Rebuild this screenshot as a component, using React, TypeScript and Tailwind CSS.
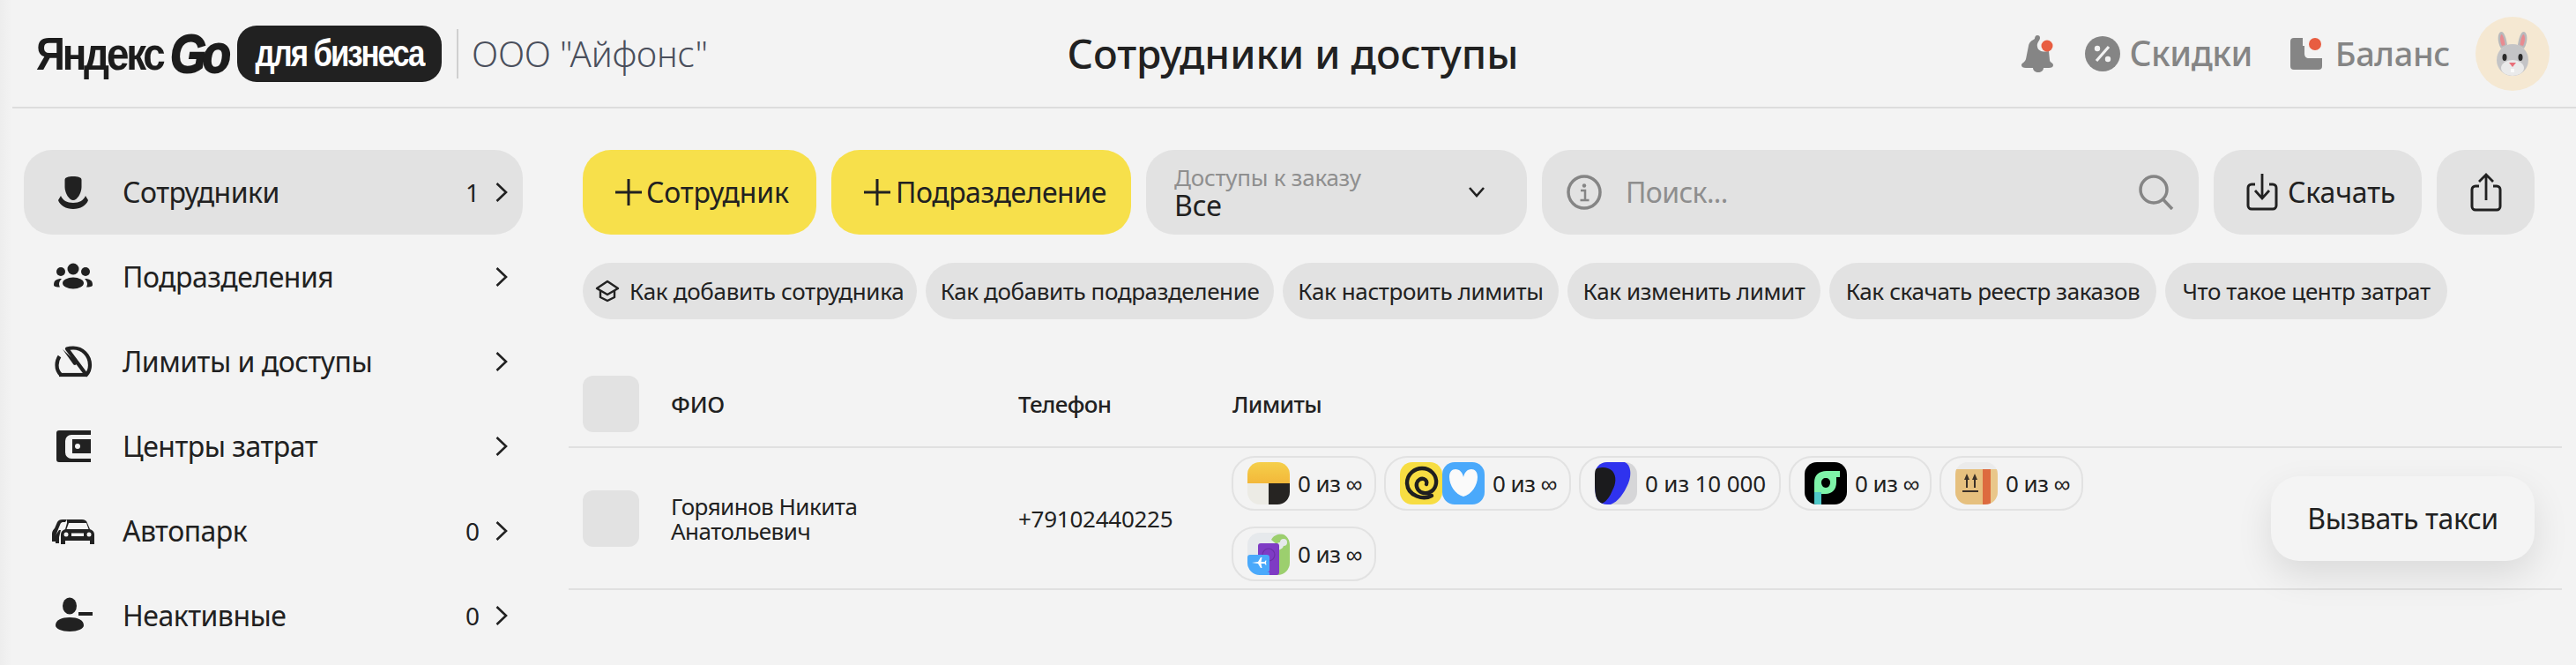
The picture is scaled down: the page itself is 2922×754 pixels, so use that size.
import React from "react";

const Chevron = () => (
  <svg width="14" height="24" viewBox="0 0 14 24" fill="none" className="shrink-0">
    <path d="M1.5 2 L12 12 L1.5 22" stroke="#212121" strokeWidth="2.6" />
  </svg>
);

const UserIcon = () => (
  <svg width="48" height="48" viewBox="0 0 48 48" fill="#212121">
    <path d="M14.500 10c0-3 4-4 9.500-4s9.500 1 9.500 4v8c0 7-5 15-9.500 15s-9.500-8-9.500-15z" />
    <path d="M10 28c2 5 7 8 14 8s12-3 14-8l3 5c-2 6-9 10-17 10S9 39 7 33z" />
  </svg>
);
const GroupIcon = () => (
  <svg width="48" height="48" viewBox="0 0 48 48" fill="#212121">
    <circle cx="24" cy="15" r="6.5" />
    <circle cx="10" cy="18" r="5" />
    <circle cx="38" cy="18" r="5" />
    <ellipse cx="24" cy="31" rx="12" ry="6.5" />
    <path d="M2 33c0-5 3-7 9-7-2 2-3 4-3 6 0 1 .5 2.500 1 3.500-4 0-7-.5-7-2.500z" />
    <path d="M46 33c0-5-3-7-9-7 2 2 3 4 3 6 0 1-.5 2.500-1 3.500 4 0 7-.5 7-2.500z" />
  </svg>
);
const GaugeIcon = () => (
  <svg width="48" height="48" viewBox="0 0 48 48" fill="none">
    <path d="M10 39c-3-3-4.500-7-4.500-11 0-4 1-7 3-10M17 9.500c2-.7 4.500-1 7-1 10.500 0 19 8.500 19 19.500 0 4-1.500 8-4 11z" stroke="#212121" strokeWidth="4.200" strokeLinejoin="round" />
    <path d="M8 39h32" stroke="#212121" strokeWidth="4.200" />
    <path d="M12 10l15.500 14.500c1.500 2-1 4.500-3 3z" fill="#212121" />
  </svg>
);
const WalletIcon = () => (
  <svg width="48" height="48" viewBox="0 0 48 48">
    <path d="M8 6h36v5H22a7 7 0 0 0-7 7v13a7 7 0 0 0 7 7h22v4H8a3 3 0 0 1-3-3V9a3 3 0 0 1 3-3z" fill="#212121" />
    <path d="M22 14h22v20H22a3 3 0 0 1-3-3V17a3 3 0 0 1 3-3z" fill="#212121" />
    <rect x="19" y="12" width="4" height="24" rx="2" fill="#f3f3f3" />
    <rect x="19" y="12" width="25" height="4" fill="#f3f3f3" />
    <rect x="19" y="32" width="25" height="4" fill="#f3f3f3" />
    <circle cx="29" cy="24" r="3" fill="#f3f3f3" />
  </svg>
);
const CarsIcon = () => (
  <svg width="48" height="48" viewBox="0 0 48 48" fill="#212121">
    <path d="M0 27c0-3 2-5 3-6l3-7c1-2 3-3 6-3h5l-2 3h-3c-1 0-2 1-2.500 2L7 22l-3 8v6H0z" />
    <path d="M4 38v-9l4-6h2l-2 8v7z" />
    <path d="M17 11h17c3 0 5 1 6 4l3 7c3 1 5 3 5 6v11h-5v-4H15v4h-5V28c0-3 2-5 5-6l2-7z" />
    <path d="M19 15h20l2.500 7H16.500z" fill="#f3f3f3" />
    <circle cx="16" cy="28" r="2.500" fill="#f3f3f3" />
    <circle cx="42" cy="28" r="2.500" fill="#f3f3f3" />
    <rect x="22" y="26.500" width="14" height="3.500" fill="#f3f3f3" />
  </svg>
);
const UserMinusIcon = () => (
  <svg width="48" height="48" viewBox="0 0 48 48" fill="#212121">
    <ellipse cx="20" cy="13" rx="8" ry="9.500" />
    <path d="M4 35c0-6 7-9 16-9s16 3 16 9c0 4-7 7-16 7S4 39 4 35z" />
    <rect x="30" y="20" width="16" height="4" />
  </svg>
);
const Plus = () => (
  <svg width="30" height="30" viewBox="0 0 30 30" fill="none" className="shrink-0">
    <path d="M15 0v30M0 15h30" stroke="#212121" strokeWidth="3" />
  </svg>
);

const ChipCap = () => (
  <svg width="28" height="26" viewBox="0 0 28 26" fill="none" className="shrink-0">
    <path d="M14 2 26 10l-12 7L2 10z" stroke="#212121" strokeWidth="2.400" strokeLinejoin="round" />
    <path d="M6 13v7l8 4 8-4v-7" stroke="#212121" strokeWidth="2.400" strokeLinejoin="round" />
  </svg>
);

const Spiral = () => (
  <svg viewBox="0 0 48 48" className="w-12 h-12 block">
    <rect width="48" height="48" fill="#f7dd42" />
    <path d="M36 38C27 43 9 39 8 24 8 13 17 7 25 7c10 0 17 8 16 17-1 8-8 12-14 11-6-1-9-6-8-11 1-4 5-6 8-5 3 1 4 4 3 6"
      fill="none" stroke="#1f1f1f" strokeWidth="4.400" strokeLinecap="round" />
  </svg>
);
const Heart = () => (
  <svg viewBox="0 0 48 48" className="w-12 h-12 block">
    <rect width="48" height="48" fill="#4aa9fb" />
    <path d="M24 39C15 37 8 26 8 17c0-6 3-9 7-9 5 0 8 4 9 9 1-5 4-9 9-9 4 0 7 3 7 9 0 9-7 20-16 22z" fill="#fafafa" />
  </svg>
);
const TaxiApp = () => (
  <svg viewBox="0 0 48 48" className="w-12 h-12 block">
    <defs>
      <linearGradient id="tg" x1="0" y1="0" x2="0" y2="1">
        <stop offset="0" stopColor="#f5cf4a" />
        <stop offset="1" stopColor="#f3b83a" />
      </linearGradient>
    </defs>
    <rect width="48" height="24" fill="url(#tg)" />
    <rect y="24" width="24" height="24" fill="#ecebe5" />
    <rect x="24" y="24" width="24" height="24" fill="#262422" />
  </svg>
);
const DarkApp = () => (
  <svg viewBox="0 0 48 48" className="w-12 h-12 block">
    <rect width="48" height="48" fill="#d6d6d8" />
    <path d="M4 0h30c7 3 8 14 4 24-5 12-12 21-20 24H6C2 44 0 36 0 24 0 12 2 4 4 0z" fill="#2f33ee" />
    <path d="M0 8C6 5 15 5 20 10c5 6 4 15 0 22-3 7-6 12-12 15C2 45 0 38 0 24z" fill="#1b1b1d" />
  </svg>
);
const GreenApp = () => (
  <svg viewBox="0 0 48 48" className="w-12 h-12 block">
    <rect width="48" height="48" fill="#000" />
    <path d="M11 44V23c0-8 5-13 14-13h15v7h-4v6c0 8-5 13-12 13h-5v8z" fill="#7ef3a8" />
    <path d="M11 34h8v14h-8z" fill="#4fc8c8" />
    <path d="M19 23c0-3 2-5 5-5s5 2 5 5-2 6-5 6-5-3-5-6z" fill="#000" />
  </svg>
);
const BoxApp = () => (
  <svg viewBox="0 0 48 48" className="w-12 h-12 block">
    <rect width="48" height="48" fill="#ebebeb" />
    <rect y="8" width="31" height="40" fill="#e6c07e" />
    <rect x="31" y="8" width="9" height="40" fill="#dd6b3f" />
    <rect x="40" y="8" width="8" height="40" fill="#e9c78a" />
    <path d="M13 13l-3 7h2v9h2v-9h2zM22 13l-3 7h2v9h2v-9h2z" fill="#3b3128" />
    <rect x="8" y="32" width="18" height="2" fill="#3b3128" />
  </svg>
);
const TravelApp = () => (
  <svg viewBox="0 0 48 48" className="w-12 h-12 block">
    <rect width="48" height="48" fill="#e6e9ec" />
    <path d="M27 8c3-6 9-7 14-6 5 2 7 6 7 10v36H32V20c4 0 9-2 9-6 0-3-5-5-8-1z" fill="#9ccf6e" />
    <circle cx="41" cy="11" r="4" fill="#e6e9ec" />
    <rect x="12" y="12" width="24" height="36" rx="3" fill="#7e3bc4" />
    <circle cx="24" cy="25" r="7" fill="none" stroke="#6a2fa6" strokeWidth="1.200" />
    <rect y="25" width="25" height="20" rx="3" fill="#4aa9fb" />
    <rect y="45" width="25" height="3" fill="#4aa9fb" />
    <path d="M5 34l7-1 3-5h1.500l-1 5 4 0 1-1.500h1l-.5 2.500.5 2.500h-1l-1-1.500-4 0 1 5H15l-3-5-7-1z" fill="#fff" />
  </svg>
);

const Bunny = () => (
  <svg width="44" height="52" viewBox="0 0 44 52">
    <path d="M9 20C4 12 5 2 9 1c4 0 6 8 7 15z" fill="#b9b9bb" />
    <path d="M35 20c5-8 4-18 0-19-4 0-6 8-7 15z" fill="#b9b9bb" />
    <path d="M10 17C7 11 8 5 9.500 4c2 1 3.500 7 4 12z" fill="#e88b90" />
    <path d="M34 17c3-6 2-12 .5-13-2 1-3.500 7-4 12z" fill="#e88b90" />
    <ellipse cx="22" cy="33" rx="18" ry="18" fill="#c4c4c6" />
    <ellipse cx="22" cy="42" rx="13" ry="9" fill="#eaeaea" />
    <ellipse cx="13" cy="30" rx="2.500" ry="4" fill="#2a2a2a" />
    <ellipse cx="31" cy="30" rx="2.500" ry="4" fill="#2a2a2a" />
    <path d="M18 36h8l-4 5z" fill="#e8707a" />
    <rect x="20" y="43" width="4" height="4" fill="#fafafa" />
  </svg>
);

const nav = [
  { label: "Сотрудники", icon: <UserIcon />, count: "1", active: true },
  { label: "Подразделения", icon: <GroupIcon /> },
  { label: "Лимиты и доступы", icon: <GaugeIcon /> },
  { label: "Центры затрат", icon: <WalletIcon /> },
  { label: "Автопарк", icon: <CarsIcon />, count: "0" },
  { label: "Неактивные", icon: <UserMinusIcon />, count: "0" },
];

const chips = [
  { t: "Как добавить подразделение", w: "w-[395px]" },
  { t: "Как настроить лимиты", w: "w-[313px]" },
  { t: "Как изменить лимит", w: "w-[287px]" },
  { t: "Как скачать реестр заказов", w: "w-[371px]" },
  { t: "Что такое центр затрат", w: "w-[320px]" },
];

const Pill = ({ icons, text, w, big }: { icons: React.ReactNode[]; text: string; w: string; big?: boolean }) => (
  <div className={`${w} h-[62px] flex items-center pl-[16px] gap-[9px] rounded-[26px] border-2 border-[#e2e2e2]`}>
    <div className="flex">
      {icons.map((ic, i) => (
        <div key={i} className="w-12 h-12 rounded-[14px] overflow-hidden">{ic}</div>
      ))}
    </div>
    <span className={`${big ? "tracking-[-0.005em]" : "tracking-[-0.02em]"} text-[26px] leading-[32px] text-[#212121] whitespace-nowrap`}>{text}</span>
  </div>
);

export default function App() {
  return (
    <div className="relative w-full h-[754px] overflow-hidden bg-[#f3f3f3] text-[#212121] font-['Noto_Sans',sans-serif]">
      <header className="h-[123px] border-b-2 border-[#dddddd] grid grid-cols-[1fr_auto_1fr] items-center pl-[41px] pr-[30px]">
        <div className="flex items-center">
          <span className="w-[152px] shrink-0 font-['Liberation_Sans',sans-serif] font-bold text-[52px] leading-none tracking-[-0.07em] text-[#1c1c1c] scale-x-[0.88] origin-left whitespace-nowrap">Яндекс</span>
          <span className="w-[76px] shrink-0 font-['Liberation_Sans',sans-serif] font-bold italic text-[62px] leading-none tracking-[-0.08em] text-[#1c1c1c] [-webkit-text-stroke:2px_#1c1c1c] scale-x-[0.85] origin-left">Go</span>
          <span className="h-16 w-[232px] shrink-0 rounded-[22px] bg-[#212121] text-white flex items-center justify-center">
            <span className="font-['Liberation_Sans',sans-serif] font-bold text-[42px] leading-none tracking-[-0.06em] scale-x-[0.83] whitespace-nowrap">для бизнеса</span>
          </span>
          <span className="ml-[17px] w-[2px] h-[56px] bg-[#cfcfcf] shrink-0" />
          <span className="ml-[15px] text-[40px] font-light tracking-[-0.005em] text-[#4a4f5c] whitespace-nowrap">ООО "Айфонс"</span>
        </div>
        <h1 className="text-[46px] font-medium text-[#212121] whitespace-nowrap">Сотрудники и доступы</h1>
        <div className="flex items-center justify-end">
          <svg width="40" height="42" viewBox="0 0 40 42" className="shrink-0">
            <path d="M19 0c2 0 3 1 3 3 0 3-4 5-3 10 1 6 8 6 13 5l1 10c0 3 4 3 4 6 0 2-2 3-5 3H6c-3 0-5-1-5-3 0-3 4-3 5-7L9 12c1-5 4-6 7-8 0-2 1-4 3-4z" fill="#858585" />
            <path d="M14 37h12c0 3-3 5-6 5s-6-2-6-5z" fill="#858585" />
            <circle cx="30" cy="12" r="6.500" fill="#e85d41" />
          </svg>
          <svg width="40" height="40" viewBox="0 0 40 40" className="ml-[33px] shrink-0">
            <circle cx="20" cy="20" r="20" fill="#858585" />
            <path d="M13 28 27 12" stroke="#f3f3f3" strokeWidth="3.200" />
            <circle cx="14" cy="14" r="3.200" fill="#f3f3f3" />
            <circle cx="26" cy="26" r="3.200" fill="#f3f3f3" />
          </svg>
          <span className="ml-[11px] text-[39px] font-medium tracking-[-0.012em] text-[#858585]">Скидки</span>
          <svg width="36" height="38" viewBox="0 0 36 38" className="ml-[43px] shrink-0">
            <rect x="0" y="1" width="36" height="36" rx="4" fill="#858585" />
            <path d="M14 0h22v24H20c-4 0-6-2-6-5z" fill="#f3f3f3" />
            <path d="M16 10v9c0 3 2 5 5 5h15v4H19c-4 0-7-3-7-7V10z" fill="#858585" />
            <circle cx="28" cy="8" r="7" fill="#e85d41" />
          </svg>
          <span className="ml-[15px] text-[38px] font-medium tracking-[-0.01em] text-[#858585]">Баланс</span>
          <div className="ml-[29px] w-[84px] h-[84px] rounded-full bg-[#f5e8d2] flex items-center justify-center shrink-0">
            <Bunny />
          </div>
        </div>
      </header>

      <div className="flex pt-[47px]">
        <aside className="pl-[27px] w-[645px] shrink-0">
          <nav className="w-[566px] flex flex-col">
            {nav.map((n) => (
              <div key={n.label} className={`h-[96px] rounded-[32px] flex items-center pl-[32px] pr-[17px] ${n.active ? "bg-[#e2e2e2]" : ""}`}>
                <span className="w-[48px] h-[48px] shrink-0">{n.icon}</span>
                <span className="ml-[32px] flex-1 text-[32px] tracking-[-0.016em] leading-none whitespace-nowrap">{n.label}</span>
                {n.count && <span className="text-[28px] leading-none mr-[18px]">{n.count}</span>}
                <Chevron />
              </div>
            ))}
          </nav>
        </aside>

        <main className="flex-1 min-w-0 pr-[16px]">
          <div className="pl-[16px] pr-[31px]">
            <div className="flex gap-[17px] h-[96px]">
              <button className="w-[265px] shrink-0 rounded-[32px] bg-[#f7e04b] flex items-center pl-[37px] gap-[5px] text-[32px] tracking-[-0.005em]">
                <Plus />Сотрудник
              </button>
              <button className="w-[340px] shrink-0 rounded-[32px] bg-[#f7e04b] flex items-center pl-[37px] gap-[6px] text-[32px] tracking-[-0.015em]">
                <Plus />Подразделение
              </button>
              <div className="w-[432px] shrink-0 rounded-[32px] bg-[#e2e2e2] flex items-center pl-[32px] pr-[48px] justify-between">
                <div className="flex flex-col">
                  <span className="text-[26px] leading-[30px] tracking-[-0.01em] text-[#8f8f8f]">Доступы к заказу</span>
                  <span className="text-[32px] leading-[34px]">Все</span>
                </div>
                <svg width="18" height="12" viewBox="0 0 18 12" fill="none">
                  <path d="M1 1l8 9 8-9" stroke="#212121" strokeWidth="2.600" />
                </svg>
              </div>
              <div className="flex-1 min-w-0 rounded-[32px] bg-[#e2e2e2] flex items-center pl-[28px] pr-[28px]">
                <svg width="40" height="40" viewBox="0 0 40 40" fill="none" className="shrink-0">
                  <circle cx="20" cy="20" r="18" stroke="#858585" strokeWidth="3.500" />
                  <circle cx="20" cy="12.500" r="2.200" fill="#858585" />
                  <path d="M16 18h5v11M15.500 29h10" stroke="#858585" strokeWidth="2.500" />
                </svg>
                <span className="ml-[27px] flex-1 text-[32px] tracking-[-0.02em] text-[#8e8e8e]">Поиск...</span>
                <svg width="40" height="40" viewBox="0 0 40 40" fill="none" className="shrink-0">
                  <circle cx="17" cy="17" r="15" stroke="#858585" strokeWidth="3.500" />
                  <path d="M27.500 28 L38 39" stroke="#858585" strokeWidth="3.500" />
                </svg>
              </div>
              <button className="w-[236px] shrink-0 rounded-[32px] bg-[#e2e2e2] flex items-center pl-[37px] gap-[11px] text-[32px] tracking-[-0.005em]">
                <svg width="36" height="42" viewBox="0 0 36 42" fill="none" className="shrink-0">
                  <path d="M10 12H6a4 4 0 0 0-4 4v20a4 4 0 0 0 4 4h24a4 4 0 0 0 4-4V16a4 4 0 0 0-4-4h-4" stroke="#212121" strokeWidth="3" />
                  <path d="M18 0v27M10 19l8 9 8-9" stroke="#212121" strokeWidth="2.800" />
                </svg>
                Скачать
              </button>
              <button className="w-[111px] shrink-0 rounded-[32px] bg-[#e2e2e2] flex items-center justify-center">
                <svg width="36" height="44" viewBox="0 0 36 44" fill="none">
                  <path d="M10 15H6a4 4 0 0 0-4 4v19a4 4 0 0 0 4 4h24a4 4 0 0 0 4-4V19a4 4 0 0 0-4-4h-4" stroke="#212121" strokeWidth="3" />
                  <path d="M18 31V2M10 10l8-8 8 8" stroke="#212121" strokeWidth="2.800" />
                </svg>
              </button>
            </div>

            <div className="mt-[32px] flex gap-[10px] h-[64px]">
              <div className="w-[379px] shrink-0 rounded-[32px] bg-[#e2e2e2] flex items-center pl-[14px] gap-[11px] text-[26px] tracking-[-0.012em] whitespace-nowrap">
                <ChipCap />Как добавить сотрудника
              </div>
              {chips.map((c) => (
                <div key={c.t} className={`${c.w} shrink-0 rounded-[32px] bg-[#e2e2e2] flex items-center justify-center text-[26px] tracking-[-0.015em] whitespace-nowrap`}>
                  {c.t}
                </div>
              ))}
            </div>
          </div>

          <div className="mt-[64px] grid grid-cols-[494px_243px_1fr] items-center pl-[16px] h-[82px] pb-[18px] border-b-2 border-[#e0e0e0] box-border">
            <div className="flex items-center">
              <span className="w-16 h-16 rounded-[12px] bg-[#e2e2e2] shrink-0" />
              <span className="ml-[36px] text-[26px] font-medium tracking-[-0.01em]">ФИО</span>
            </div>
            <span className="text-[26px] font-medium tracking-[-0.025em]">Телефон</span>
            <span className="text-[26px] font-medium tracking-[-0.025em]">Лимиты</span>
          </div>
          <div className="grid grid-cols-[494px_242px_1fr] items-center pl-[16px] pt-[9px] pb-[8px] border-b-2 border-[#e0e0e0]">
            <div className="flex items-center">
              <span className="w-16 h-16 rounded-[12px] bg-[#e2e2e2] shrink-0" />
              <span className="ml-[36px] text-[26px] leading-[28px] tracking-[-0.02em]">Горяинов Никита<br />Анатольевич</span>
            </div>
            <span className="text-[26px] tracking-[-0.01em]">+79102440225</span>
            <div className="w-[1000px] flex flex-wrap gap-x-[9px] gap-y-[18px]">
              <Pill w="w-[164px]" icons={[<TaxiApp />]} text="0 из ∞" />
              <Pill w="w-[212px]" icons={[<Spiral />, <Heart />]} text="0 из ∞" />
              <Pill w="w-[229px]" big icons={[<DarkApp />]} text="0 из 10 000" />
              <Pill w="w-[162px]" icons={[<GreenApp />]} text="0 из ∞" />
              <Pill w="w-[163px]" icons={[<BoxApp />]} text="0 из ∞" />
              <Pill w="w-[164px]" icons={[<TravelApp />]} text="0 из ∞" />
            </div>
          </div>
        </main>
      </div>

      <button className="absolute left-[2576px] top-[540px] w-[299px] h-[96px] rounded-[32px] bg-[#f4f4f4] shadow-[0_16px_40px_rgba(0,0,0,0.1)] text-[32px] tracking-[-0.012em]">
        Вызвать такси
      </button>
      <div className="absolute left-0 top-0 w-[14px] h-full bg-gradient-to-r from-[#ededed] to-[#f3f3f3] pointer-events-none" />
    </div>
  );
}
